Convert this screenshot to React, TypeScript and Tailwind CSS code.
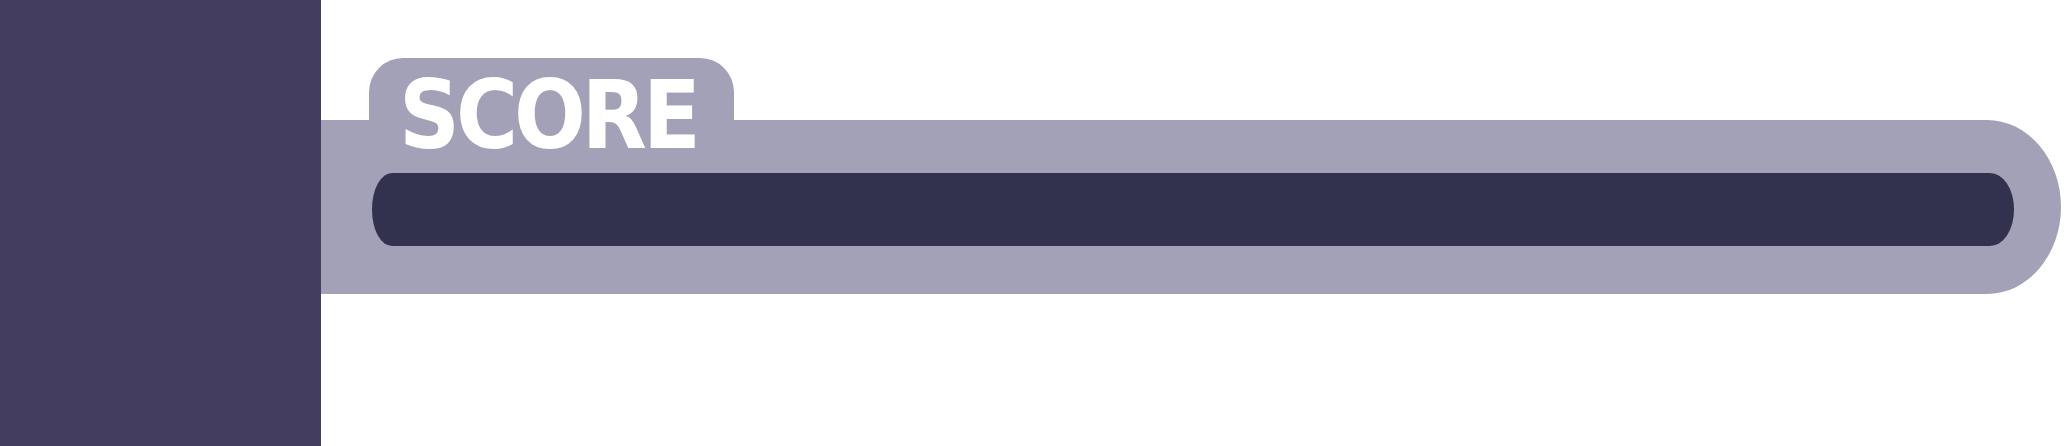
import React from "react";

export default function App() {
  return (
    <div className="flex w-[2069px] h-[446px] bg-white overflow-hidden">
      <div className="w-[321px] h-[446px] shrink-0 bg-[#433e5f]" />
      <div className="flex flex-col pt-[58px] w-[1740px]">
        <div className="relative z-10 ml-[48px] w-[365px] h-[62px] rounded-t-[34px] bg-[#a2a1b7] pl-[30px] pt-[11px]">
          <div className="font-['DejaVu_Sans_Condensed','DejaVu_Sans',sans-serif] font-bold text-[94px] leading-none text-white tracking-[-4px] whitespace-nowrap">
            SCORE
          </div>
        </div>
        <div className="h-[174px] bg-[#a2a1b7] rounded-[0_74px_74px_0/0_87px_87px_0] pt-[53px] pl-[51px] pr-[47px]">
          <div className="h-[73px] bg-[#33324e] rounded-[20px_24px_24px_20px/36px]" />
        </div>
      </div>
    </div>
  );
}
